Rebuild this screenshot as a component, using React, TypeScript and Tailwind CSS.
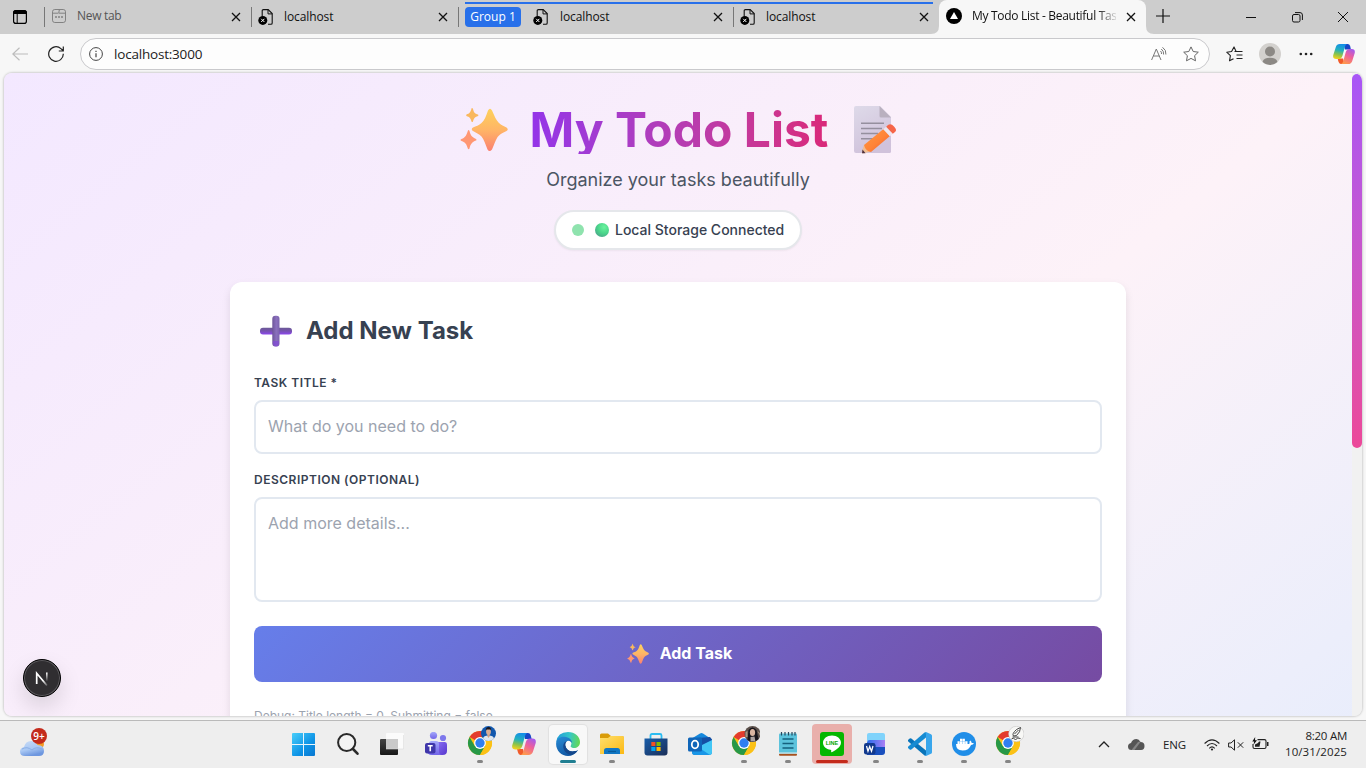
import React from "react";

const UI = "font-['Open_Sans','Noto_Sans',sans-serif]";

type SvgProps = { className?: string };

/* ---------- emoji drawings ---------- */

function Sparkles({ className, id }: SvgProps & { id: string }) {
  return (
    <svg viewBox="0 0 48 48" className={className}>
      <defs>
        <linearGradient id={id} x1="0" y1="0" x2="0" y2="1">
          <stop offset="0" stopColor="#fdd15c" />
          <stop offset="0.5" stopColor="#ffb566" />
          <stop offset="1" stopColor="#fb8070" />
        </linearGradient>
      </defs>
      <g fill={`url(#${id})`}>
        <path d="M28 4.500Q30 1 32 4.500C34.500 10 36 14 38.500 16.500C41 19 44 20 46.500 21.500Q49 23.500 46.500 25C44 26.500 41 27 38.500 30C36 32.500 34.500 38 32 43.500Q29.500 46.500 27.500 43.500C25.500 38.500 24 33.500 21.500 30.500C19 28 16 27 13 25Q10.500 23 13 21.500C16 20 19 19.500 21.500 17C24.500 14.500 26 10 28 4.500Z" />
      </g>
      <path fill="#f9b85e" d="M11.700 2Q12.500 1.500 13 3C14 7 15 7.500 18 8.500Q19 9.200 18 10C15 11 14 12 13 15.500Q12.300 16.500 11.500 15.500C10.500 12 9.500 11 6.500 10Q5.700 9.200 6.500 8.500C9.500 7.500 10.500 6.500 11.700 2Z" />
      <path fill="#ff9773" d="M8 24.500Q8.700 23.500 9.500 25C10.500 29.500 12 31 16 33Q17 34 16 34.500C12 36 10.500 38 9.500 42.500Q8.700 44 7.800 42.500C6.500 38 5.500 36.500 1.500 35Q-.5 34 1.500 33C5.500 31.500 6.500 29 8 24.500Z" />
    </svg>
  );
}

function Memo({ className }: SvgProps) {
  return (
    <svg viewBox="0 0 48 50" className={className}>
      <defs>
        <linearGradient id="memoPaper" x1="0" y1="0" x2="0.4" y2="1">
          <stop offset="0" stopColor="#dedae9" />
          <stop offset="1" stopColor="#d0c2db" />
        </linearGradient>
        <linearGradient id="memoPencil" x1="0" y1="0" x2="1" y2="1">
          <stop offset="0" stopColor="#ff9a42" />
          <stop offset="0.55" stopColor="#ff8338" />
          <stop offset="1" stopColor="#e8582f" />
        </linearGradient>
      </defs>
      <path fill="url(#memoPaper)" d="M3 1H27L38 12V46.500Q38 48 36.500 48H3Q1 48 1 46V3Q1 1 3 1Z" />
      <path fill="#b9b0bf" d="M26.500 1L38 12.500H28Q26.500 12.500 26.500 11Z" />
      <g stroke="#958f9e" strokeWidth="1.500">
        <path d="M8 18.200H31M8 23.400H29M8 28.600H25M8 33.800H20" />
      </g>
      <path fill="#f0bd94" d="M11 40L18 46.500L10.500 48.300H9V46Z" />
      <path fill="#4c3040" d="M9.500 44.500L12.500 48.300H9Z" />
      <path fill="url(#memoPencil)" d="M11 40L30.500 24L37 31L18 47Q12.500 46 11 40Z" />
      <path fill="#eee6ef" d="M30.200 24.200L33.200 21.700L39.800 28.800L36.800 31.300Z" />
      <path fill="#f66649" d="M33.200 21.700L35 20Q38 18.200 41 21.500Q44.500 25 42 27L39.800 28.800Z" />
    </svg>
  );
}

function PlusEmoji() {
  return (
    <svg viewBox="0 0 32 32" className="h-8 w-8">
      <defs>
        <linearGradient id="plusH" x1="0" y1="0" x2="0" y2="1">
          <stop offset="0" stopColor="#6b5a96" />
          <stop offset="0.450" stopColor="#7552ad" />
          <stop offset="1" stopColor="#8b46ea" />
        </linearGradient>
        <linearGradient id="plusV" x1="0" y1="0" x2="1" y2="0">
          <stop offset="0" stopColor="#6d5599" />
          <stop offset="0.55" stopColor="#8a70bd" />
          <stop offset="1" stopColor="#7b63ad" />
        </linearGradient>
      </defs>
      <rect x="0" y="12.800" width="32" height="6.600" rx="3" fill="url(#plusH)" />
      <rect x="12.300" y="0.800" width="7.200" height="30.700" rx="3" fill="url(#plusV)" />
      <path d="M13 26V29Q13.500 31.500 16 31.500Q18.800 31.500 18.800 29V26" fill="#8149d7" opacity="0.700" />
    </svg>
  );
}

/* ---------- browser icons ---------- */

function CloseX({ className = "" }: SvgProps) {
  return (
    <svg viewBox="0 0 10 10" className={`h-[10px] w-[10px] shrink-0 ${className}`} stroke="#111" strokeWidth="1.300" fill="none">
      <path d="M1 1L9 9M9 1L1 9" />
    </svg>
  );
}

function BrokenPage() {
  return (
    <svg viewBox="0 0 16 16" className="-mt-px h-4 w-4 shrink-0" fill="none">
      <path d="M4.200 7V1.800Q4.200.600 5.400.600H10.200L14.200 4.600V14Q14.200 15.300 13 15.300H10" stroke="#111" strokeWidth="1.100" />
      <path d="M10 .700V4.900H14.200" stroke="#111" strokeWidth="1" />
      <circle cx="4.800" cy="11.400" r="4.500" fill="#000" />
      <path d="M3.200 9.800L6.400 13M6.400 9.800L3.200 13" stroke="#fff" strokeWidth="1" />
    </svg>
  );
}

function Copilot({ className, id }: SvgProps & { id: string }) {
  return (
    <svg viewBox="0 0 24 24" className={className}>
      <defs>
        <linearGradient id={`${id}a`} x1="0.500" y1="0" x2="0.300" y2="1">
          <stop offset="0" stopColor="#148ee8" />
          <stop offset="0.400" stopColor="#22b1bd" />
          <stop offset="0.700" stopColor="#8bc34a" />
          <stop offset="1" stopColor="#f7d21b" />
        </linearGradient>
        <linearGradient id={`${id}b`} x1="0.800" y1="0" x2="0.300" y2="1">
          <stop offset="0" stopColor="#a35bf0" />
          <stop offset="0.450" stopColor="#ed5f9d" />
          <stop offset="1" stopColor="#ff9a4c" />
        </linearGradient>
      </defs>
      <path d="M11.500 1H16Q18 1 18.600 3L19.600 7H13Z" fill="#1746c7" />
      <path d="M5 17H11L12.500 22.900H8.500Q6.500 22.700 6 20.500Z" fill="#f15b2a" />
      <path d="M7.500 1H15.200Q13.700 1.500 13 4L10.400 13.500Q9.300 17.500 6 17.500H3.500Q-.7 17.500 .300 13L3 4.500Q4 1 7.500 1Z" fill={`url(#${id}a)`} />
      <path d="M16.500 22.900H8.800Q10.500 22.400 11.200 20L13.700 10.500Q14.800 6.500 18 6.500H20.500Q24.500 6.500 23.700 11L21 19.500Q20 22.900 16.500 22.900Z" fill={`url(#${id}b)`} />
    </svg>
  );
}

/* ---------- tab strip ---------- */

function Sep() {
  return <div className="h-5 w-px shrink-0 bg-[#777]" />;
}

function TabStrip() {
  const label = "-mt-px text-[12px] leading-[16px] tracking-[-0.1px] text-[#111] whitespace-nowrap";
  return (
    <div className={`relative flex h-[34px] items-center bg-[#cdcdcd] ${UI}`}>
      <div className="absolute left-[465px] top-[2px] h-[2px] w-[468px] bg-[#2870ea]" />
      <div className="flex w-11 shrink-0 items-center pb-px pl-[13px]">
        <svg viewBox="0 0 14 14" className="h-[14px] w-[14px]">
          <rect x="0.600" y="0.600" width="12.800" height="12.800" rx="2.200" fill="none" stroke="#000" strokeWidth="1.200" />
          <path d="M.6 3.500V2.500Q.6.600 2.500.600H11.500Q13.400.600 13.400 2.500V3.500Z" fill="#000" stroke="#000" />
          <path d="M4.200 4V13" stroke="#000" />
        </svg>
      </div>
      <Sep />
      <div className="flex w-[206px] shrink-0 items-center pl-[7px]">
        <svg viewBox="0 0 14 14" className="-mt-[2px] h-[14px] w-[14px] shrink-0" fill="none" stroke="#828282">
          <rect x="0.500" y="0.500" width="13" height="13" rx="2.300" />
          <path d="M.5 4.200H6Q7 4.200 7 3.200V2Q7 .700 8.300.700M7 4.200H13.500" />
          <path d="M3 8H5M6 8H8M9 8H11" strokeWidth="1.600" />
        </svg>
        <span className="-mt-[2px] ml-[11px] flex-1 text-[12px] leading-4 tracking-[-0.3px] text-[#555]">New tab</span>
        <CloseX className="mr-[10px]" />
      </div>
      <Sep />
      <div className="flex w-[206px] shrink-0 items-center pl-[6px]">
        <BrokenPage />
        <span className={`${label} ml-[10px] flex-1`}>localhost</span>
        <CloseX className="mr-[10px]" />
      </div>
      <Sep />
      <div className="ml-[6px] flex h-5 w-14 shrink-0 items-center justify-center rounded bg-[#2870ea] text-[12px] leading-none text-white">
        Group 1
      </div>
      <div className="flex w-[212px] shrink-0 items-center pl-3">
        <BrokenPage />
        <span className={`${label} ml-[11px] flex-1`}>localhost</span>
        <CloseX className="mr-[10px]" />
      </div>
      <Sep />
      <div className="flex w-[205px] shrink-0 items-center pl-[6px]">
        <BrokenPage />
        <span className={`${label} ml-[10px] flex-1`}>localhost</span>
        <CloseX className="mr-[10px]" />
      </div>
      <div className="relative flex h-[34px] w-[207px] shrink-0 items-center rounded-t-lg bg-[#f7f7f7] pl-[7px]">
        <svg viewBox="0 0 8 8" className="absolute -left-2 bottom-0 h-2 w-2"><path d="M8 0V8H0Q8 8 8 0Z" fill="#f7f7f7" /></svg>
        <svg viewBox="0 0 8 8" className="absolute -right-2 bottom-0 h-2 w-2"><path d="M0 0V8H8Q0 8 0 0Z" fill="#f7f7f7" /></svg>
        <svg viewBox="0 0 16 16" className="-mt-[2px] h-4 w-4 shrink-0">
          <circle cx="8" cy="8" r="8" fill="#000" />
          <path d="M8 4L12 11H4Z" fill="#fff" />
        </svg>
        <span className="-mt-[2px] ml-[10px] w-[144px] overflow-hidden whitespace-nowrap text-[12px] leading-4 tracking-[-0.3px] text-[#111] [mask-image:linear-gradient(to_right,#000_125px,transparent_147px)]">
          My Todo List - Beautiful Tas
        </span>
        <CloseX className="ml-[10px]" />
      </div>
      <svg viewBox="0 0 14 14" className="-mt-[2px] ml-[10px] h-[14px] w-[14px] shrink-0" stroke="#111" strokeWidth="1.200"><path d="M7 0V14M0 7H14" /></svg>
      <svg viewBox="0 0 10 10" className="-mt-px ml-[76px] h-[10px] w-[10px] shrink-0" stroke="#111"><path d="M0 5.500H10" /></svg>
      <svg viewBox="0 0 11 11" className="ml-[36px] h-[11px] w-[11px] shrink-0" stroke="#111" fill="none">
        <rect x="0.500" y="2.500" width="7.500" height="7.500" rx="1.500" />
        <path d="M3 .6H8Q10.400.600 10.400 3V8" />
      </svg>
      <svg viewBox="0 0 10 10" className="ml-[35px] h-[10px] w-[10px] shrink-0" stroke="#111"><path d="M0 0L10 10M10 0L0 10" /></svg>
    </div>
  );
}

const STAR = "M8 .9L10.200 5.500L15.300 6.200L11.600 9.700L12.500 14.800L8 12.400L3.500 14.800L4.400 9.700L.7 6.200L5.800 5.500Z";

function Toolbar() {
  return (
    <div className={`flex h-[39px] items-center bg-[#f7f7f7] ${UI}`}>
      <svg viewBox="0 0 16 14" className="ml-3 h-[14px] w-4 shrink-0" fill="none" stroke="#bcbcbc" strokeWidth="1.200"><path d="M16 7H1M7.500 .800L.8 7L7.500 13.200" /></svg>
      <svg viewBox="0 0 16 16" className="ml-5 h-4 w-4 shrink-0" fill="none" stroke="#222" strokeWidth="1.200"><path d="M15.300 7.800A7.300 7.300 0 1 1 12.900 2.600L15.200 4.800M15.300.600V5H10.800" /></svg>
      <div className="ml-4 mt-px flex h-8 w-[1130px] shrink-0 items-center rounded-full border border-[#c9c9cc] bg-[#fdfdfd] pl-[8px] pr-[10px]">
        <svg viewBox="0 0 14 14" className="h-[14px] w-[14px] shrink-0" fill="none" stroke="#444"><circle cx="7" cy="7" r="6.400" /><path d="M7 6.300V10.300M7 3.800V5" strokeWidth="1.200" /></svg>
        <span className="ml-[11px] mt-px flex-1 text-[13.500px] leading-none tracking-[-0.2px] text-[#222]">localhost:3000</span>
        <svg viewBox="0 0 16 14" className="h-[14px] w-4" fill="none" stroke="#777">
          <path d="M.6 13L5.300 2L10 13M2.300 9H8.300M9.500 4Q10.700 5 10.500 7M10.300 2Q13 4 12.600 7.500M11.500.300Q15.500 3 14.900 7.500" />
        </svg>
        <svg viewBox="0 0 16 16" className="ml-4 h-4 w-4" fill="none" stroke="#666"><path d={STAR} strokeLinejoin="round" /></svg>
      </div>
      <svg viewBox="0 0 17 16" className="ml-4 h-4 w-[17px] shrink-0" fill="none" stroke="#222" strokeWidth="1.100">
        <path d="M10 5.300L8 .9L5.600 5.500L.7 6.200L4.400 9.700L3.500 14.800L7.500 12.700M8.500 5.500H16.500M10.500 9H16.500M10.500 12.500H16.500" strokeLinejoin="round" />
      </svg>
      <svg viewBox="0 0 22 22" className="ml-[16px] mt-px h-[22px] w-[22px] shrink-0">
        <circle cx="11" cy="11" r="11" fill="#d3d1ce" />
        <circle cx="11" cy="8.500" r="5" fill="#8c8985" />
        <path d="M3.600 19Q4.500 14.800 11 14.800Q17.500 14.800 18.400 19Q15 22 11 22Q7 22 3.600 19Z" fill="#8c8985" />
      </svg>
      <svg viewBox="0 0 14 4" className="ml-[18px] mt-px h-1 w-[14px] shrink-0" fill="#222"><circle cx="1.800" cy="2" r="1.300" /><circle cx="7" cy="2" r="1.300" /><circle cx="12.200" cy="2" r="1.300" /></svg>
      <Copilot id="cpTop" className="ml-5 mt-px h-[22px] w-[22px] shrink-0" />
    </div>
  );
}

/* ---------- page ---------- */

function Page() {
  return (
    <main className="relative ml-1 flex h-[643px] w-[1358px] overflow-hidden rounded-lg bg-[#f1f1f1] font-[Inter,sans-serif] shadow-[0_0_2px_1px_rgba(0,0,0,0.15)]">
      <div className="h-full w-[1348px] overflow-hidden">
        <div className="flex h-[1100px] w-full flex-col items-center bg-[linear-gradient(to_bottom_right,#f3e8ff,#fdf2f8_50%,#dbeafe)] pt-[33px]">
          <div className="flex h-12 items-center">
            <Sparkles id="spBig" className="h-12 w-12" />
            <h1 className="ml-[19px] w-[306px] whitespace-nowrap bg-gradient-to-r from-[#9333ea] to-[#db2777] bg-clip-text pl-[3px] text-[48px] font-bold leading-[48px] text-transparent">My Todo List</h1>
            <Memo className="-mr-[4px] ml-[20px] h-[50px] w-12" />
          </div>
          <p className="mt-3 text-[18px] leading-7 text-[#4b5563]">Organize your tasks beautifully</p>
          <div className="mt-4 flex h-10 w-[248px] items-center rounded-full border-2 border-[#e5e7eb] bg-white pl-4 shadow-[0_1px_2px_rgba(0,0,0,0.05)]">
            <div className="h-3 w-3 rounded-full bg-[#8fe3ae]" />
            <div className="ml-[11px] h-[14px] w-[14px] rounded-full bg-[radial-gradient(circle_at_65%_30%,#6bf39e,#4bd68b_45%,#4b8f89)]" />
            <span className="-mt-px ml-[6px] whitespace-nowrap text-[14px] font-medium leading-5 text-[#374151]">Local Storage Connected</span>
          </div>

          <section className="mt-8 h-[700px] w-[896px] rounded-xl bg-white px-6 pt-6 shadow-[0_4px_8px_rgba(0,0,0,0.1)]">
            <div className="flex h-[50px] items-center pl-[6px]">
              <PlusEmoji />
              <h2 className="ml-[14px] text-[24px] font-bold leading-8 text-[#374151]">Add New Task</h2>
            </div>
            <div className="mt-[18px] text-[12px] font-semibold uppercase leading-[18px] tracking-[0.5px] text-[#374151]">Task Title *</div>
            <input placeholder="What do you need to do?" className="mt-2 block h-[54px] w-full rounded-lg border-2 border-[#e2e8f0] bg-white px-3 pb-[2px] text-[16px] outline-none placeholder:text-[#9ca3af]" />
            <div className="mt-[17px] text-[12px] font-semibold uppercase leading-[18px] tracking-[0.5px] text-[#374151]">Description (Optional)</div>
            <textarea placeholder="Add more details..." className="mt-2 block h-[105px] w-full resize-none rounded-lg border-2 border-[#e2e8f0] bg-white p-3 text-[16px] leading-6 outline-none placeholder:text-[#9ca3af]" />
            <button className="mt-6 flex h-14 w-full items-center justify-center rounded-lg bg-[linear-gradient(135deg,#667eea_0%,#764ba2_100%)] pb-[2px] pl-[3px] text-[16px] font-bold text-white">
              <Sparkles id="spSmall" className="mr-[11px] mt-px h-[22px] w-[22px]" />
              Add Task
            </button>
            <div className="mt-[25px] text-[12px] leading-[18px] text-[#9ca3af]">Debug: Title length = 0, Submitting = false</div>
          </section>
        </div>
      </div>
      <div className="h-full w-[10px] bg-[#f1f1f1] pt-[1px]">
        <div className="h-[374px] w-[10px] rounded-full bg-gradient-to-b from-[#a855f7] to-[#ec4899]" />
      </div>
      <div className="absolute left-[19px] top-[586px] flex h-[38px] w-[38px] items-center justify-center rounded-full border border-black bg-[#302e31] shadow-[inset_0_0_0_1px_#5d5b5f,0_10px_22px_rgba(0,0,0,0.13)]">
        <svg viewBox="0 0 14 15" className="h-[15px] w-[14px]" fill="none">
          <defs>
            <linearGradient id="nTail" x1="0" y1="0" x2="0" y2="1"><stop offset="0" stopColor="#fff" /><stop offset="1" stopColor="#fff" stopOpacity="0" /></linearGradient>
            <linearGradient id="nDiag" x1="0" y1="0" x2="1" y2="1"><stop offset="0.600" stopColor="#fff" /><stop offset="1" stopColor="#fff" stopOpacity="0.200" /></linearGradient>
          </defs>
          <path d="M1.700 13V2.300L12 14.500" stroke="url(#nDiag)" strokeWidth="1.700" />
          <rect x="11" y="1.500" width="1.600" height="9" fill="url(#nTail)" />
        </svg>
      </div>
    </main>
  );
}

/* ---------- taskbar ---------- */

function Chrome({ variant }: { variant: "man" | "woman" | "sketch" }) {
  return (
    <svg viewBox="0 0 32 32" className="h-8 w-8">
      <g transform="translate(4 5)">
        <circle cx="12" cy="12" r="12" fill="#fbc116" />
        <path d="M12 12L1.600 6A12 12 0 0 1 22.400 6Z" fill="#e33b2e" />
        <path d="M1.600 6A12 12 0 0 0 12 24L17.200 15L12 12L6.800 15Z" fill="#279847" />
        <path d="M12 6H22.400A12 12 0 0 1 12 24L17.200 15Z" fill="#fbc116" />
        <circle cx="12" cy="12" r="5.900" fill="#fff" />
        <circle cx="12" cy="12" r="4.700" fill="#2f7ff0" />
      </g>
      {variant === "man" && (
        <g>
          <circle cx="24.500" cy="7.500" r="7.500" fill="#1258ae" />
          <path d="M19 12.500Q19.500 9.500 24.500 9.500Q29.500 9.500 30 12.500Q28 15 24.500 15Q21 15 19 12.500Z" fill="#dfe6ed" />
          <path d="M23.500 8H25.500V10.500L24.500 12L23.500 10.500Z" fill="#d5a184" />
          <ellipse cx="24.500" cy="5.500" rx="2.400" ry="3.500" fill="#dcae93" />
          <path d="M21.800 5Q21.500 1 24.500 1Q27.500 1 27.200 5L26.500 3.500H22.500Z" fill="#191922" />
        </g>
      )}
      {variant === "woman" && (
        <g>
          <circle cx="24.500" cy="8" r="8" fill="#5b504b" />
          <path d="M19.500 14L20.500 4Q24.500 -1 28.500 4L30.500 13Q27.500 16 24.500 16Q21.500 16 19.500 14Z" fill="#17151b" />
          <ellipse cx="24.500" cy="6.500" rx="2.600" ry="3.500" fill="#d9b5a1" />
          <path d="M22.500 11L26.500 10.500L27.500 15.500H22.500Z" fill="#aaa19f" />
          <path d="M17.500 6L19.500 5V11L17.500 11M29.500 5L32 7V10" fill="#a89684" />
        </g>
      )}
      {variant === "sketch" && (
        <g fill="none" stroke="#333">
          <circle cx="24.300" cy="8" r="7.700" fill="#f8f8f6" stroke="#bbb" strokeWidth="0.500" />
          <path d="M21.500 10Q19.500 8 24.500 3.500L28.500 1.500Q28.500 6 24.500 9.500ZM22.500 8L26.500 4M20.500 11H26.500M19.500 13L21.500 12L23.500 14L25.500 12L28.500 12.500" strokeWidth="0.900" />
        </g>
      )}
    </svg>
  );
}

function StartIcon() {
  return (
    <svg viewBox="0 0 24 24" className="h-6 w-6">
      <defs><linearGradient id="winG" gradientUnits="userSpaceOnUse" x1="0" y1="0" x2="23" y2="24"><stop stopColor="#4bd0fb" /><stop offset="0.600" stopColor="#0e94e6" /><stop offset="1" stopColor="#0876d0" /></linearGradient></defs>
      <path fill="url(#winG)" d="M1 1H12V12H0V2Q0 1 1 1ZM12 1H22Q23 1 23 2V12H12ZM0 12H12V24H1Q0 24 0 23ZM12 12H23V23Q23 24 22 24H12Z" />
      <path d="M11.500 1V24M0 12.500H23" stroke="#e9f5fb" />
    </svg>
  );
}

function SearchIcon() {
  return (
    <svg viewBox="0 0 24 24" className="h-6 w-6" fill="none" stroke="#292929">
      <circle cx="10.700" cy="10.500" r="8.600" strokeWidth="2" fill="#f3f3f3" />
      <path d="M17 17L21.500 21.700" strokeWidth="2.600" strokeLinecap="round" />
    </svg>
  );
}

function TaskViewIcon() {
  return (
    <svg viewBox="0 0 24 24" className="h-6 w-6">
      <defs><linearGradient id="tvG" x2="0" y2="1"><stop stopColor="#454545" /><stop offset="1" stopColor="#171717" /></linearGradient></defs>
      <rect x="0" y="7" width="18" height="16" rx="1" fill="url(#tvG)" />
      <rect x="6" y="1" width="18" height="16" rx="1" fill="#fbfbfb" />
      <path d="M6 7H18V17H7Q6 17 6 16Z" fill="#c9c9c9" />
      <path d="M6 17H23.500V3" stroke="#dadada" strokeWidth="0.600" fill="none" />
    </svg>
  );
}

function TeamsIcon() {
  return (
    <svg viewBox="0 0 24 24" className="h-6 w-6">
      <defs>
        <linearGradient id="tmA" x2="0" y2="1"><stop stopColor="#a4a8fa" /><stop offset="1" stopColor="#7164e8" /></linearGradient>
        <linearGradient id="tmB" x2="1" y2="1"><stop stopColor="#8b72f5" /><stop offset="1" stopColor="#5636cd" /></linearGradient>
      </defs>
      <circle cx="9.500" cy="3.500" r="3.600" fill="url(#tmA)" />
      <circle cx="19" cy="6" r="3.100" fill="#7e78ec" />
      <path d="M14 10H21Q23 10 23 12.500V19Q23 23 18.500 23H12Z" fill="url(#tmB)" />
      <path d="M5 11.500Q5 9 7.500 9H12Q15 9 15 12V19Q15 23 18 23H8Q3 23 3 18Z" fill="url(#tmA)" />
      <rect x="1" y="11" width="10.500" height="10.500" rx="2" fill="#3f36aa" />
      <path d="M3.800 13.800H8.700M6.250 13.800V19.200" stroke="#fff" strokeWidth="1.600" />
    </svg>
  );
}

function EdgeIcon() {
  return (
    <svg viewBox="0 0 24 24" className="h-6 w-6">
      <defs>
        <linearGradient id="edA" x1="0" y1="0.300" x2="1" y2="0.400"><stop stopColor="#219bd9" /><stop offset="0.550" stopColor="#35c7c7" /><stop offset="1" stopColor="#64d854" /></linearGradient>
        <linearGradient id="edB" x2="0.400" y2="1"><stop stopColor="#278cd6" /><stop offset="1" stopColor="#1259a5" /></linearGradient>
      </defs>
      <path d="M.2 10Q1.600 0 12 0C19 0 24 4.800 24 10C24 14 21 16 18 16C14.500 16 13.500 14.500 15 13C16 11.500 15.400 8 12 8L5 7Z" fill="url(#edA)" />
      <path d="M.1 12C.1 7 4 4.500 8.500 4.800C13 5 16 8 16 11C14 8 9.500 9 9.500 13C9.500 18 15 21.500 22 18C19.500 22 16 24 12 24C5.500 24 .1 18.500 .1 12Z" fill="url(#edB)" />
      <path d="M8.500 10.500C5.500 14 8 22 15 23C18 22.500 20.500 20.500 22 18C15 21.500 9.500 18 9.500 13Q9.500 11 11 9.500Q9.600 9.500 8.500 10.500Z" fill="#14478b" />
      <path d="M15 13C13.700 14.600 15 16 18 16L22 18Q17 20 13 17.500Q9.300 15 9.500 12Q10 9 12.500 8.800Q15.500 9.500 15 13Z" fill="#f7fafb" />
    </svg>
  );
}

function FolderIcon() {
  return (
    <svg viewBox="0 0 24 24" className="h-6 w-6">
      <defs><linearGradient id="fdG" x2="1" y2="1"><stop stopColor="#ffdf6d" /><stop offset="1" stopColor="#fbb914" /></linearGradient></defs>
      <path d="M0 6V3Q0 1.500 1.500 1.500H8L11 4H22Q24 4 24 6Z" fill="#d99c09" />
      <path d="M0 6H8L10.500 4H22.500Q24 4 24 5.500V22H0Z" fill="url(#fdG)" />
      <path d="M4 22V18.500Q4 16 6.500 16H17.500Q20 16 20 18.500V22Z" fill="#1177c4" />
      <path d="M8 19.500H16" stroke="#085b9c" strokeWidth="1.200" />
    </svg>
  );
}

function StoreIcon() {
  return (
    <svg viewBox="0 0 24 24" className="h-6 w-6">
      <defs><linearGradient id="stG" x2="1" y2="1"><stop stopColor="#175daa" /><stop offset="1" stopColor="#1b2e57" /></linearGradient></defs>
      <path d="M6.500 7V3.500Q6.500 2 8 2H16Q17.500 2 17.500 3.500V7" fill="none" stroke="#2bbcf1" strokeWidth="1.800" />
      <path d="M.5 6.500H23.500V20.500Q23.500 23.500 20.500 23.500H3.500Q.5 23.500 .5 20.500Z" fill="url(#stG)" />
      <path fill="#f25022" d="M7.300 10H11.400V14H7.300Z" /><path fill="#7fba00" d="M12.500 10H16.600V14H12.500Z" />
      <path fill="#00a4ef" d="M7.300 15H11.400V19H7.300Z" /><path fill="#ffb900" d="M12.500 15H16.600V19H12.500Z" />
    </svg>
  );
}

function OutlookIcon() {
  return (
    <svg viewBox="0 0 24 24" className="h-6 w-6">
      <path d="M3 7L12 1.500Q13.500 .7 15 1.500L24 7.500V20Q24 23 21 23H7Q4 23 4 20Z" fill="#1688dc" />
      <path d="M10 6L22 5L24 7.500V9L13 16Z" fill="#154fa4" />
      <path d="M12 14L24 8V20Q24 23 21 23H7Z" fill="#42c6f5" />
      <path d="M4 16L10 15L22 23H7Q4 23 4 20Z" fill="#1996e7" />
      <rect x="0" y="5.500" width="14" height="14" rx="1.500" fill="#1066b9" />
      <ellipse cx="7" cy="12.500" rx="3.200" ry="3.800" fill="none" stroke="#fff" strokeWidth="1.800" />
    </svg>
  );
}

function NotepadIcon() {
  return (
    <svg viewBox="0 0 24 24" className="h-6 w-6">
      <rect x="3" y="21.500" width="18" height="2.300" rx="1" fill="#a65220" />
      <rect x="3" y="1.500" width="18" height="20" rx="1" fill="#5cc3dc" />
      <path d="M3 21H21" stroke="#dceef2" />
      <path d="M5.500 0V3.500M9 0V3.500M12.500 0V3.500M16 0V3.500M19 0V3.500" stroke="#27495e" strokeWidth="1.200" />
      <path d="M6.500 7H17.500M6.500 11.500H17.500M6.500 16H17.500" stroke="#14617e" strokeWidth="1.500" />
    </svg>
  );
}

function LineIcon() {
  return (
    <svg viewBox="0 0 24 24" className="h-6 w-6">
      <rect width="24" height="24" rx="3" fill="#05b700" />
      <path d="M12 3.500C7 3.500 3 6.700 3 10.700C3 14.300 6.200 17.200 10.500 17.800C11.500 18 11.300 19 11.100 20.300C13.500 19.400 21 15.700 21 10.700C21 6.700 17 3.500 12 3.500Z" fill="#fff" />
      <text x="12" y="13" textAnchor="middle" fontFamily="Liberation Sans, sans-serif" fontSize="5.500" fontWeight="700" fill="#05a500">LINE</text>
    </svg>
  );
}

function WordIcon() {
  return (
    <svg viewBox="0 0 24 24" className="h-6 w-6">
      <defs><linearGradient id="wdG" x2="1"><stop stopColor="#256bed" /><stop offset="1" stopColor="#aa80f4" /></linearGradient></defs>
      <path d="M3 3Q3 1 5 1H19Q21 1 21 3V9H3Z" fill="#80d3fb" />
      <path d="M3 11Q3 8 6 8H21V16H3Z" fill="url(#wdG)" />
      <path d="M3 18Q3 15 6 15H21V20Q21 23 18 23H3Z" fill="#194fbe" />
      <rect x="0" y="11" width="11.500" height="11.500" rx="2.300" fill="#12398d" />
      <path d="M2.500 14L4 19.200L5.700 14.500L7.500 19.200L9 14" stroke="#fff" strokeWidth="1.300" fill="none" />
    </svg>
  );
}

function VSCodeIcon() {
  return (
    <svg viewBox="0 0 24 24" className="h-6 w-6">
      <path d="M0 8L1.700 6.500Q2.500 6 3.300 6.500L18 18.500V23.800L16.500 23.500L0 9.200Q-.5 8.600 0 8Z" fill="#0873b9" />
      <path d="M0 16L1.700 17.500Q2.500 18 3.300 17.500L18 5.500V.2L16.500 .5L0 14.800Q-.5 15.400 0 16Z" fill="#168bd2" />
      <path d="M17 .3L18 0L23 2.200Q24 2.700 24 3.800V20.200Q24 21.300 23 21.800L18 24L17 23.700Q18 23 18 21.500V2.500Q18 1 17 .3Z" fill="#38a6ec" />
    </svg>
  );
}

function DockerIcon() {
  return (
    <svg viewBox="0 0 24 24" className="h-6 w-6">
      <circle cx="12" cy="12" r="12" fill="#208ee8" />
      <path d="M4 12H17Q18 11.800 17.500 9.500L18.300 8.500Q19.700 9.500 19.700 11Q21 10.800 22 11.300Q21 13 19 13Q17 18.500 10.500 18.500Q4 18.500 4 12Z" fill="#fff" />
      <path d="M5.500 9.300H7.700V12H5.500ZM8 9.300H10.300V12H8ZM10.600 9.300H12.900V12H10.600ZM13.200 9.300H15.500V12H13.200ZM8 6.800H10.300V9H8ZM10.600 6.800H12.900V9H10.600Z" fill="#fff" />
    </svg>
  );
}

const apps: { icon: React.ReactNode; dot?: boolean; mode?: "active" | "alert"; wide?: boolean }[] = [
  { icon: <StartIcon /> },
  { icon: <SearchIcon /> },
  { icon: <TaskViewIcon /> },
  { icon: <TeamsIcon /> },
  { icon: <Chrome variant="man" />, dot: true, wide: true },
  { icon: <Copilot id="cpBar" className="h-6 w-6" /> },
  { icon: <EdgeIcon />, mode: "active" },
  { icon: <FolderIcon />, dot: true },
  { icon: <StoreIcon /> },
  { icon: <OutlookIcon /> },
  { icon: <Chrome variant="woman" />, dot: true, wide: true },
  { icon: <NotepadIcon />, dot: true },
  { icon: <LineIcon />, mode: "alert" },
  { icon: <WordIcon />, dot: true },
  { icon: <VSCodeIcon />, dot: true },
  { icon: <DockerIcon />, dot: true },
  { icon: <Chrome variant="sketch" />, dot: true, wide: true },
];

function Taskbar() {
  return (
    <footer className={`mt-[4px] flex h-12 items-center border-t border-[#bababa] bg-[#eeeeee] ${UI}`}>
      <div className="relative -mt-[2px] ml-5 h-8 w-7 shrink-0">
        <svg viewBox="0 0 28 32" className="h-8 w-7">
          <defs><linearGradient id="cloudG" x2="0.400" y2="1"><stop stopColor="#c9dcf5" /><stop offset="0.600" stopColor="#a9c8f4" /><stop offset="1" stopColor="#6e97df" /></linearGradient></defs>
          <circle cx="19" cy="16" r="5" fill="#f49b24" />
          <path d="M5 28Q0 28 0 23.500Q0 20 4 19Q5.500 13 11 13Q15.500 13 17.500 17Q24 17 24 23Q24 28 19 28Z" fill="url(#cloudG)" />
          <path d="M2 21Q7 18 12 22Q16 18 22 21" stroke="#89aee6" fill="none" />
        </svg>
        <div className="absolute left-[11px] top-0 flex h-4 w-4 items-center justify-center rounded-full bg-[#c42b1c] text-[10px] font-semibold leading-none text-white">9+</div>
      </div>
      <div className="ml-[234px] flex shrink-0">
        {apps.map((a, i) => (
          <div key={i} className="relative flex h-[47px] w-[44px] shrink-0 items-center justify-center">
            {a.mode === "active" && <div className="absolute left-[3px] top-[4px] h-[39px] w-[38px] rounded bg-[#f8f8f8] shadow-[0_0_1px_1px_rgba(0,0,0,0.06)]" />}
            {a.mode === "alert" && <div className="absolute left-[2px] top-[3px] h-10 w-10 rounded bg-[#e9afab]" />}
            <div className={a.wide ? "relative -ml-px -mt-[5px]" : "relative -mt-px"}>{a.icon}</div>
            {a.dot && <div className="absolute bottom-[5px] h-[3px] w-[6px] rounded-full bg-[#858585]" />}
            {a.mode === "active" && <div className="absolute bottom-[5px] h-[3px] w-4 rounded-full bg-[#217f92]" />}
            {a.mode === "alert" && <div className="absolute bottom-[5px] h-[3px] w-8 rounded-full bg-[#c42b1c]" />}
          </div>
        ))}
      </div>
      <svg viewBox="0 0 12 7" className="ml-[68px] h-[7px] w-3 shrink-0" fill="none" stroke="#222" strokeWidth="1.300"><path d="M1 6L6 1L11 6" /></svg>
      <svg viewBox="0 0 17 12" className="ml-[18px] h-3 w-[17px] shrink-0">
        <path d="M3.500 11Q0 11 0 7.500Q0 4.500 3 4Q4.500 0 8.500 0Q11 0 12.500 3Q16.500 3 16.500 7Q16.500 11 13 11Z" fill="#555" />
        <path d="M3.500 11L10 3Q11.500 2 12.500 3L6.500 11Z" fill="#858585" />
      </svg>
      <span className="ml-[18px] w-[25px] shrink-0 text-[11.500px] tracking-[-0.1px] text-[#222]">ENG</span>
      <svg viewBox="0 0 16 12" className="ml-[16px] h-3 w-4 shrink-0" fill="none" stroke="#222" strokeWidth="1.100">
        <path d="M.6 4.500Q8-2.800 15.400 4.500M3 7Q8 2 13 7M5.300 9.300Q8 6.500 10.700 9.300" />
        <circle cx="8" cy="10.500" r="1.100" fill="#222" stroke="none" />
      </svg>
      <svg viewBox="0 0 16 12" className="ml-[8px] h-3 w-4 shrink-0" fill="none" stroke="#222">
        <path d="M.6 4H3L6.500 .8V11.200L3 8H.6ZM9.800 3.300L15.200 8.700M15.200 3.300L9.800 8.700" />
      </svg>
      <svg viewBox="0 0 17 13" className="-mt-[2px] ml-[8px] h-[13px] w-[17px] shrink-0">
        <path d="M5.500 2.600H12.500Q14 2.600 14 4V10Q14 11.500 12.500 11.500H2.500Q1 11.500 1 10V7" fill="none" stroke="#222" strokeWidth="1.100" />
        <path d="M15 5V9H16.500V5Z" fill="#222" />
        <path d="M7 4.500H8.500L7.500 9.800H3V7.500L6 6Z" fill="#222" />
        <path d="M3.200 0L.3 4.500H2.200L1.500 7.800L5 3.200H3Z" fill="#111" />
      </svg>
      <div className="-mt-[2px] ml-auto mr-[19px] shrink-0 text-right text-[11.500px] leading-4 text-[#222]">
        <div className="tracking-[-0.25px]">8:20 AM</div>
        <div className="tracking-[0.1px]">10/31/2025</div>
      </div>
    </footer>
  );
}

export default function App() {
  return (
    <div className="h-[768px] w-[1366px] overflow-hidden bg-[#f7f7f7]">
      <TabStrip />
      <Toolbar />
      <Page />
      <Taskbar />
    </div>
  );
}
